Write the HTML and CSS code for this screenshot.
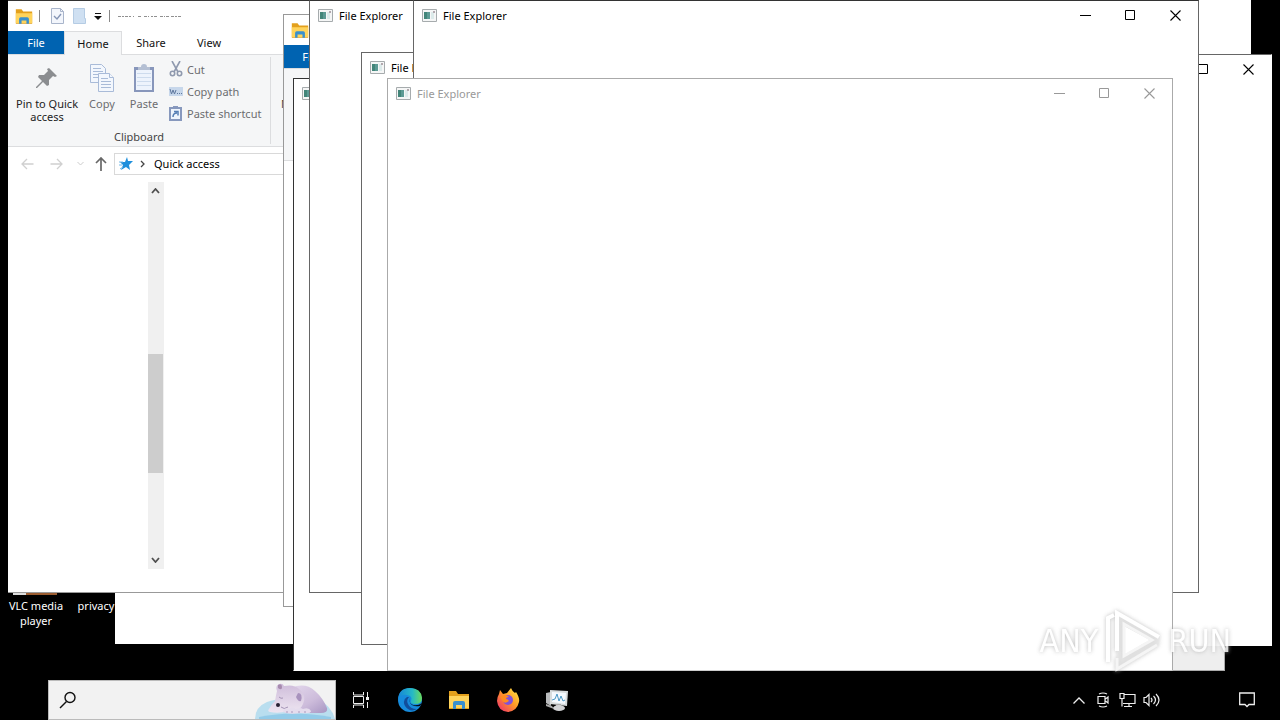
FILE: index.html
```html
<!DOCTYPE html>
<html lang="en">
<head>
<meta charset="utf-8">
<title>Desktop</title>
<link rel="stylesheet" href="styles.css">
</head>
<body>
<svg class="defs" aria-hidden="true">
  <symbol id="folder" viewBox="0 0 22 20">
    <path d="M1 1h7l2 3h11v15H1z" fill="#e3a01c"/><path d="M1 6h20v12H1z" fill="#ffd45c"/>
    <path d="M5 19v-6q0-2 2-2h8q2 0 2 2v6h-3v-4H8v4z" fill="#3990ce"/>
  </symbol>
  <symbol id="app" viewBox="0 0 15 13">
    <path d="M.5.5h14v12H.5z" fill="#f5f6f6" stroke="#a6abad"/><path d="M2 3h6v7H2z" fill="#5c9a94"/><path d="M2 3h3v7H2z" fill="#428579"/>
    <path d="M9 3h3v7H9z" fill="#dceaea"/><path d="M11 2h2v2h-2z" fill="#b2a8ae"/>
  </symbol>
  <symbol id="min" viewBox="0 0 11 11"><path d="M0 5.5h11" stroke="currentColor"/></symbol>
  <symbol id="max" viewBox="0 0 11 11"><path d="M.5.5h9v9H.5z" fill="none" stroke="currentColor"/></symbol>
  <symbol id="close" viewBox="0 0 11 11"><path d="M.5.5l10 10M10.500.5l-10 10" fill="none" stroke="currentColor" stroke-width="1.1"/></symbol>
</svg>

<main class="desktop">
  <div class="shortcut vlc"><span class="cone"></span>VLC media player</div>
  <div class="shortcut priv">privacy</div>

  <section class="window w-back"></section>
  <section class="window w-low"></section>
  <section class="window w-pale"></section>
  <section class="window w-right">
    <header class="titlebar"><svg class="app"><use href="#app"/></svg><h2>File Explorer</h2>
      <button class="ctl" aria-label="Minimize"><svg><use href="#min"/></svg></button><button class="ctl" aria-label="Maximize"><svg><use href="#max"/></svg></button><button class="ctl" aria-label="Close"><svg><use href="#close"/></svg></button></header>
  </section>

  <section class="window explorer w-main">
    <header class="quickbar">
      <svg class="folder"><use href="#folder"/></svg><i class="sep"></i>
      <button class="tool" aria-label="Properties"><svg width="13" height="16" viewBox="0 0 13 16"><path d="M.5.5h9l3 3v12H.5z" fill="#f3f6fc" stroke="#a9b5cb"/><path d="M9.500.5v3h3" fill="none" stroke="#a9b5cb"/><path d="M3 8l3 3 4-5" fill="none" stroke="#8595b5" stroke-width="1.4"/></svg></button>
      <button class="tool" aria-label="New folder"><svg width="13" height="16" viewBox="0 0 13 16"><path d="M.5.5h11v10h1v5H.5z" fill="#cfe0f2" stroke="#b5cce4"/></svg></button>
      <button class="tool drop" aria-label="Customize"><svg width="8" height="7" viewBox="0 0 8 7"><path d="M1 .5h6" stroke="#111"/><path d="M0 3h8L4 7z" fill="#111"/></svg></button>
      <i class="sep"></i>
      <svg class="torn" width="66" height="3" viewBox="0 0 66 3"><path d="M0 1.500h6m1 0h3m1 0h2m2 0h1m4 0h4m2 0h5m2 0h2m1 0h4m2 0h5m1 0h3m2 0h6m1 0h3" stroke="#909090" stroke-dasharray="3 1 2 1"/></svg>
    </header>
    <nav class="tabs"><button class="tab file">File</button><button class="tab current">Home</button><button class="tab">Share</button><button class="tab">View</button></nav>
    <div class="ribbon">
      <div class="group">
        <div class="commands">
          <button class="big pin"><svg width="22" height="26" viewBox="0 0 22 26"><path d="M13 3l8 8-2 1-2-1-4 4 0 5-2 1-4-4-6 6-1 0 0-1 6-6-4-4 1-2h5l4-4-1-2z" fill="#8b8d90"/></svg><span>Pin to Quick access</span></button>
          <button class="big copy"><svg width="24" height="28" viewBox="0 0 24 28"><g fill="#f3f7fd" stroke="#a9bbd8"><path d="M.5.5h11l4 4v14H.5z"/><path d="M3 4.500h8M3 7.500h10M3 10.500h10M3 13.500h10"/><path d="M8.500 9.500h11l4 4v14h-15z"/><path d="M19.500 9.500v4h4M11 14.500h7M11 17.500h10M11 20.500h10M11 23.500h10"/></g></svg><span>Copy</span></button>
          <button class="big"><svg width="22" height="28" viewBox="0 0 22 28"><path d="M1 3h20v25H1z" fill="#8796bb"/><path d="M3 6h16v20H3z" fill="#edf3fc"/><path d="M4 9.500h14M4 13.500h14M4 17.500h14M4 21.500h14" stroke="#cddbed"/><path d="M5 3h3q0-3 3-3t3 3h3v3H5z" fill="#b4bfd3"/></svg><span>Paste</span></button>
          <div class="small-list">
            <button class="small"><svg width="14" height="16" viewBox="0 0 14 16"><g fill="none" stroke="#8f99ae" stroke-width="1.600"><path d="M3 0l6 11M11 0L5 11"/><circle cx="3.500" cy="12.500" r="2.200"/><circle cx="10.500" cy="12.500" r="2.200"/></g></svg>Cut</button>
            <button class="small"><svg width="14" height="9" viewBox="0 0 14 9"><path d="M0 0h14v9H0z" fill="#c7d7eb"/><path d="M1 2l1.500 5L4 3l1.500 4L7 3M8 6.500h1m1 0h1m1 0h1" stroke="#60799f" fill="none"/></svg>Copy path</button>
            <button class="small"><svg width="14" height="15" viewBox="0 0 14 15"><path d="M1 2h11v12H1z" fill="#eef4fc" stroke="#8798bd" stroke-width="2"/><path d="M4 0h5v3H4z" fill="#8798bd"/><path d="M4 11q0-4 4-4M5 5.500h4v4" stroke="#557eb4" stroke-width="1.500" fill="none"/></svg>Paste shortcut</button>
          </div>
        </div>
        <div class="group-name">Clipboard</div>
      </div>
      <span class="move">Move to</span>
    </div>
    <div class="address">
      <button class="nav" aria-label="Back"><svg width="13" height="12" viewBox="0 0 13 12"><path d="M12.500 6H1m5-5L1 6l5 5" fill="none" stroke="#d0d0d0" stroke-width="1.300"/></svg></button>
      <button class="nav" aria-label="Forward"><svg width="13" height="12" viewBox="0 0 13 12"><path d="M.5 6H12M7 1l5 5-5 5" fill="none" stroke="#d0d0d0" stroke-width="1.300"/></svg></button>
      <button class="nav narrow" aria-label="Recent"><svg width="7" height="5" viewBox="0 0 7 5"><path d="M.5 1l3 3 3-3" fill="none" stroke="#ccc"/></svg></button>
      <button class="nav up" aria-label="Up"><svg width="12" height="14" viewBox="0 0 12 14"><path d="M6 14V1M1 6l5-5 5 5" fill="none" stroke="#686868" stroke-width="1.700"/></svg></button>
      <div class="path"><svg width="14" height="14" viewBox="0 0 14 14"><path d="M8 0l1 4h5l-4 4 1 5-4-3-5 3 2-5-3-3h5z" fill="#1e8fdc"/><path d="M0 5h4M0 8h3M1 12l3-2" stroke="#70b9ea"/></svg><svg class="chev" width="5" height="8" viewBox="0 0 5 8"><path d="M1 1l3 3-3 3" fill="none" stroke="#444" stroke-width="1.300"/></svg><span>Quick access</span></div>
    </div>
    <div class="scroll"><svg width="9" height="6" viewBox="0 0 9 6"><path d="M1 5l3.500-4L8 5" fill="none" stroke="#505050" stroke-width="1.800"/></svg><i class="thumb"></i><svg width="9" height="6" viewBox="0 0 9 6"><path d="M1 1l3.500 4L8 1" fill="none" stroke="#505050" stroke-width="1.800"/></svg></div>
  </section>

  <section class="window explorer w-second">
    <header class="quickbar"><svg class="folder"><use href="#folder"/></svg></header>
    <nav class="tabs"><button class="tab file">File</button></nav>
    <div class="ribbon"></div>
  </section>
  <section class="window w-third"><header class="titlebar"><svg class="app"><use href="#app"/></svg></header></section>
  <section class="window w-fourth"><header class="titlebar"><svg class="app"><use href="#app"/></svg><h2>File Explorer</h2></header></section>
  <section class="window w-fifth"><header class="titlebar"><svg class="app"><use href="#app"/></svg><h2>File Explorer</h2></header></section>
  <section class="window w-sixth">
    <header class="titlebar"><svg class="app"><use href="#app"/></svg><h2>File Explorer</h2>
      <button class="ctl" aria-label="Minimize"><svg><use href="#min"/></svg></button><button class="ctl" aria-label="Maximize"><svg><use href="#max"/></svg></button><button class="ctl" aria-label="Close"><svg><use href="#close"/></svg></button></header>
  </section>
  <section class="window w-front">
    <header class="titlebar"><svg class="app"><use href="#app"/></svg><h2>File Explorer</h2>
      <button class="ctl" aria-label="Minimize"><svg><use href="#min"/></svg></button><button class="ctl" aria-label="Maximize"><svg><use href="#max"/></svg></button><button class="ctl" aria-label="Close"><svg><use href="#close"/></svg></button></header>
  </section>

  <div class="watermark"><span>ANY</span>
    <svg width="58" height="64" viewBox="0 0 58 64"><path d="M13 4l42 24v8L13 61z" fill="#e6e6e6" opacity=".7"/><path d="M20 17v29l26-15z" fill="#fff"/><g fill="none" stroke="#fff" stroke-width="4"><path d="M4 53V9l6-3"/><path d="M13 42V4l42 24"/></g><g fill="none" stroke="#f4f4f4" stroke-width="3"><path d="M20 15v32l28-16z"/><path d="M13 49v11l40-24"/></g></svg>
    <span>RUN</span></div>
</main>

<footer class="taskbar">
  <label class="search">
    <svg width="18" height="18" viewBox="0 0 18 18"><circle cx="11" cy="6.500" r="5" fill="none" stroke="#111" stroke-width="1.400"/><path d="M7.500 10.500L1 17" stroke="#111" stroke-width="1.500"/></svg>
    <input type="text" aria-label="Search">
    <svg class="bear" width="80" height="36" viewBox="0 0 80 36">
      <defs>
        <linearGradient id="fur" x1="0" y1="0" x2="1" y2="1"><stop offset="0" stop-color="#e6dbee"/><stop offset=".6" stop-color="#cdbcdb"/><stop offset="1" stop-color="#a795c2"/></linearGradient>
        <linearGradient id="face" x1="0" y1="0" x2="0" y2="1"><stop offset="0" stop-color="#cebcda"/><stop offset="1" stop-color="#eee5f1"/></linearGradient>
      </defs>
      <path d="M0 36q0-12 12-17 8-3 18-3h32q14 6 18 20z" fill="#b9deef"/><path d="M4 34q34-7 72 0v2H4z" fill="#93cbe9"/>
      <path d="M36 5q14-6 24 3 8 7 12 17 1 5-6 5H30z" fill="url(#fur)"/>
      <path d="M14 26q3-5 6-8 1-6 2-10-2-5 2-7 4-1 5 2 10-2 15 3 8 6 4 15-3 8-13 7-12 3-20 1-3-1-1-3z" fill="url(#face)"/>
      <path d="M23 2q4-2 4 2t-4 1z" fill="#a68aae"/><path d="M43 10q5 0 3 8-3 1-5-4z" fill="#a892bd"/>
      <path d="M24 14q2 2 4 1M26 24q3 3 7 0" fill="none" stroke="#a493b6"/>
      <ellipse cx="23" cy="22" rx="2" ry="2" fill="#282033"/>
      <path d="M28 29q1-5 6-3 3-3 7 0 4-2 7 0 6-2 8 2 0 3-10 2-12 2-18-1z" fill="#e5dced"/><path d="M32 28v2m5-2v2m7-2v2m6-2v2" stroke="#a89abd"/>
    </svg>
  </label>
  <nav class="apps">
    <button aria-label="Task view"><svg width="18" height="18" viewBox="0 0 18 18"><g fill="none" stroke="#eee"><path d="M1.500 1v3h10V1M1.500 5.500h10v7h-10zM1.500 17v-3h10v3M15.500 1v5m0 5v6"/></g><path d="M14 6h3v3h-3z" fill="#eee"/></svg></button>
    <button aria-label="Edge"><svg width="24" height="24" viewBox="0 0 24 24"><defs><linearGradient id="ea"><stop stop-color="#1685d7"/><stop offset=".6" stop-color="#26b9c6"/><stop offset="1" stop-color="#6bdb5b"/></linearGradient></defs><circle cx="12" cy="12" r="12" fill="#168bdc"/><path d="M0 11Q1 0 12 0t12 10q0 6-7 6-5 0-4-3 2-5-4-6Q3 6 0 11z" fill="url(#ea)"/><path d="M9 9q-5 3-2 9 5 7 12 3-7 0-9-5-2-4 1-7z" fill="#114e9b"/><path d="M12 10q-2 5 3 7 5 1 9-2l-2 3q-5 1-8-1-4-3-2-7z" fill="#050b12"/></svg></button>
    <button aria-label="File Explorer"><svg width="22" height="20"><use href="#folder"/></svg></button>
    <button aria-label="Firefox"><svg width="24" height="24" viewBox="0 0 24 24"><defs><linearGradient id="ff" x1="1" y1="0" x2="0" y2="1"><stop stop-color="#ffed4b"/><stop offset=".45" stop-color="#ff9c26"/><stop offset="1" stop-color="#ee2373"/></linearGradient></defs><path d="M3 6l1-4 3 4 4-1 4-5q1 3 4 5l1-1q4 6 3 10-2 9-11 10Q2 23 1 13q0-4 2-7z" fill="url(#ff)"/><circle cx="12" cy="12" r="5" fill="#8151d9"/><path d="M4 9q5-4 9 0-3 0-3 2 2 0 3 2-5 4-7-1z" fill="#ff8b20"/></svg></button>
    <button aria-label="Monitor"><svg width="24" height="24" viewBox="0 0 24 24"><path d="M1 5l5-1v14l-5-3z" fill="#b9bbbd"/><path d="M5 2l18 1-1 15-17-2z" fill="#d8dcdd"/><path d="M7 4l14 1-1 11-13-2z" fill="#f5faff"/><path d="M7 12l3-1 2-5 2 7 2-5 2 5 2-1" fill="none" stroke="#4c98c5"/><path d="M11 16h5v4h-5z" fill="#aaa"/><ellipse cx="14" cy="20" rx="6" ry="3" fill="#d2d3d5"/><path d="M1 16l6 2 2 3-8-3z" fill="#aaa"/></svg></button>
  </nav>
  <div class="tray">
    <button aria-label="Hidden icons"><svg width="12" height="7" viewBox="0 0 12 7"><path d="M.5 6.500L6 1l5.500 5.500" fill="none" stroke="#eee" stroke-width="1.300"/></svg></button>
    <button aria-label="Meet now"><svg width="12" height="16" viewBox="0 0 12 16"><path d="M2 2q4-2 8 0M2 14q4 2 8 0M1 4.500h7v7H1zM8.500 7l2.500-2v6L8.500 9" fill="none" stroke="#eee" stroke-width="1.200"/></svg></button>
    <button aria-label="Network"><svg width="17" height="15" viewBox="0 0 17 15"><path d="M5 1.500h11v9H4M1 .5h4v5H1zM3 5.500v8m7-3v3M5 13.500h8" fill="none" stroke="#eee" stroke-width="1.200"/></svg></button>
    <button aria-label="Volume"><svg width="17" height="14" viewBox="0 0 17 14"><path d="M1 4.500h2l3-3v11l-3-3H1zM8 5q2 2 0 4M10.500 3q4 4 0 8M13 1q6 6 0 12" fill="none" stroke="#eee" stroke-width="1.200"/></svg></button>
    <button class="notice" aria-label="Notifications"><svg width="16" height="16" viewBox="0 0 16 16"><path d="M.7 1h14.600v11.500H10l-2 2-2-2H.7z" fill="none" stroke="#eee" stroke-width="1.300"/></svg></button>
  </div>
</footer>
</body>
</html>
```
FILE: styles.css
```css
* { box-sizing: border-box; }
body {
  margin: 0;
  height: 100vh;
  display: flex;
  flex-direction: column;
  overflow: hidden;
  background: #000;
  color: #111;
  font: 11px/13px "Noto Sans", "Open Sans", sans-serif;
}
button { border: 0; padding: 0; background: none; color: inherit; font: inherit; }
svg { display: block; flex: none; }
h2 { margin: 0; font: inherit; white-space: nowrap; }
.defs { position: absolute; width: 0; height: 0; }
.desktop { position: relative; flex: 1; }

/* Windows on the desktop */
.window { position: absolute; background: #fff; border: 1px solid #666; overflow: hidden; }
.w-back { left: 361px; top: 0; width: 890px; height: 644px; border-color: #fff; }
.w-low { left: 115px; top: 52px; width: 889px; height: 592px; border-color: #fff; }
.w-pale { left: 439px; top: 78px; width: 786px; height: 593px; background: #eee; border-color: #aaa; }
.w-right { left: 487px; top: 54px; width: 785px; height: 592px; border-right-color: #fff; border-bottom-color: #fff; }
.w-main { left: 8px; top: 0; width: 890px; height: 593px; border-left: 0; border-top-color: #333; border-bottom-color: #999; }
.w-second { left: 283px; top: 14px; width: 889px; height: 593px; border-color: #999; }
.w-third { left: 293px; top: 78px; width: 785px; height: 593px; border-color: #333 #333 #fff; }
.w-fourth { left: 309px; top: 0; width: 785px; height: 593px; border-top-color: #333; }
.w-fifth { left: 361px; top: 52px; width: 785px; height: 593px; }
.w-sixth { left: 413px; top: 0; width: 786px; height: 593px; border-top-color: #333; }
.w-front { left: 387px; top: 78px; width: 786px; height: 593px; border-color: #aaa; border-bottom-color: #ccc; }

.titlebar { display: flex; align-items: center; height: 28px; padding-left: 8px; color: #000; }
.w-front .titlebar { color: #999; }
.titlebar .app { width: 15px; height: 13px; margin-right: 6px; }
.titlebar h2 { flex: 1; }
.ctl { width: 45px; height: 28px; display: grid; place-items: center; }
.ctl svg { width: 11px; height: 11px; }

/* Explorer ribbon */
.quickbar { display: flex; align-items: center; height: 30px; padding-left: 7px; gap: 8px; }
.folder { width: 18px; height: 17px; }
.sep { width: 1px; height: 12px; background: #888; margin: 0 3px 0 -2px; }
.tool { width: 14px; }
.drop { display: grid; place-items: center; margin-left: -4px; }
.drop + .sep { margin-left: -4px; }
.torn { margin-left: -3px; }
.tabs { display: flex; height: 23px; }
.tab { width: 58px; height: 23px; border: 1px solid transparent; border-bottom: 0; padding-bottom: 1px; }
.tab.file { width: 56px; background: #0063b1; color: #fff; }
.tab.current { height: 24px; background: #f5f6f7; border-color: #dcdddf; z-index: 1; }
.ribbon { display: flex; height: 93px; background: #f5f6f7; border: solid #dcdddf; border-width: 1px 0; }
.w-second .tabs { margin-left: -1px; }
.group { width: 263px; height: 87px; margin-top: 2px; border-right: 1px solid #dcdddf; display: flex; flex-direction: column; }
.commands { display: flex; color: #6c6d70; }
.big { width: 42px; height: 71px; padding-top: 7px; display: flex; flex-direction: column; align-items: center; gap: 5px; }
.big svg { height: 28px; }
.big.pin { width: 78px; padding-left: 4px; padding-right: 4px; color: #222; }
.big.copy { width: 36px; margin-left: -2px; margin-right: 3px; }
.small-list { display: flex; flex-direction: column; padding: 1px 0 0 4px; }
.small { height: 22px; display: flex; align-items: center; gap: 4px; white-space: nowrap; }
.group-name { text-align: center; color: #444; padding-top: 2px; }
.move { white-space: nowrap; margin: 42px 0 0 10px; color: #444; }

/* Address row and navigation scrollbar */
.address { display: flex; align-items: center; height: 33px; padding-left: 12px; }
.nav { width: 30px; display: flex; justify-content: flex-start; }
.nav:first-child { padding-left: 1px; }
.nav.narrow { width: 16px; margin-left: -3px; }
.nav.up { width: 21px; padding-left: 2px; }
.path { flex: 1; height: 22px; border: 1px solid #d9d9d9; display: flex; align-items: center; padding-left: 4px; color: #000; }
.chev { margin: 0 9px 0 7px; }
.scroll { width: 16px; height: 387px; margin: 2px 0 0 140px; padding: 6px 1px 6px 0; background: #f0f0f0; display: flex; flex-direction: column; align-items: center; justify-content: space-between; }
.thumb { width: 15px; height: 119px; margin-top: 76px; background: #cdcdcd; }

/* Desktop shortcuts */
.shortcut { position: absolute; top: 591px; padding-top: 7px; color: #fff; text-align: center; line-height: 15px; }
.vlc { left: 4px; width: 64px; }
.priv { left: 64px; width: 64px; }
.cone { position: absolute; left: 9px; top: 0; width: 44px; height: 4px; background: linear-gradient(90deg, #ddd 13px, #9b5c30 13px); }

.watermark { position: absolute; right: 49px; bottom: 7px; display: flex; align-items: center; gap: 6px; color: #fff; font: 32px/64px "DejaVu Sans Condensed", "Liberation Sans", sans-serif; text-shadow: 0 0 4px #aaa; }
.watermark svg { filter: drop-shadow(0 0 2px #bbb); opacity: .9; }
.watermark span { opacity: .85; }

/* Taskbar */
.taskbar { display: flex; align-items: center; height: 40px; padding-left: 48px; background: #000; }
.search { width: 288px; height: 40px; display: flex; align-items: center; padding-left: 10px; background: #f2f2f2; border: 1px solid #bbb; }
.search input { flex: 1; min-width: 0; border: 0; background: none; font: inherit; }
.bear { align-self: flex-end; }
.apps { display: flex; }
.apps button { width: 49px; height: 40px; display: grid; place-items: center; }
.tray { margin-left: auto; display: flex; align-items: center; }
.tray button { width: 24px; height: 40px; display: grid; place-items: center; }
.tray .notice { width: 48px; margin-left: 60px; margin-right: 9px; }
```
